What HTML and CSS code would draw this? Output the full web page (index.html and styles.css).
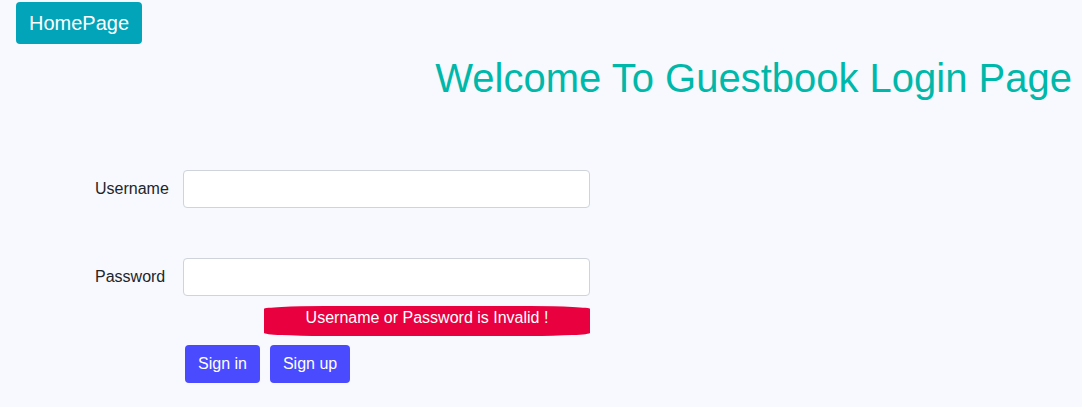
FILE: index.html
```html
<!DOCTYPE html>
<html>
<head>
<meta charset="utf-8">
<link rel="stylesheet" href="styles.css">
</head>
<body>
<header class="top">
  <a class="home-btn" href="#">HomePage</a>
</header>
<h1 class="title">Welcome To Guestbook Login Page</h1>
<form class="login">
  <div class="row">
    <label class="lbl">Username</label>
    <input class="field" type="text">
  </div>
  <div class="row row-second">
    <label class="lbl">Password</label>
    <input class="field" type="password">
  </div>
  <div class="error">Username or Password is Invalid !</div>
  <div class="actions">
    <button class="btn" type="button">Sign in</button>
    <button class="btn" type="button">Sign up</button>
  </div>
</form>
</body>
</html>
```
FILE: styles.css
```css
html, body {
  margin: 0;
  padding: 0;
  background: #f8f8ff;
  font-family: "Liberation Sans", Arial, sans-serif;
  color: #212529;
}
body {
  height: 407px;
  overflow: hidden;
}
.top {
  padding: 2px 0 0 16px;
  display: flex;
}
.home-btn {
  display: inline-block;
  background: #02a4ba;
  color: #fff;
  font-size: 20px;
  line-height: 30px;
  padding: 6px 13px;
  border-radius: 4px;
  text-decoration: none;
}
.title {
  margin: 11px 10px 0 0;
  text-align: right;
  font-size: 40px;
  font-weight: normal;
  line-height: 46px;
  color: #00b8a9;
}
.login {
  padding: 69px 0 0 95px;
  display: flex;
  flex-direction: column;
}
.row {
  display: flex;
  align-items: center;
}
.row-second {
  margin-top: 50px;
}
.lbl {
  width: 88px;
  font-size: 16px;
}
.field {
  box-sizing: border-box;
  width: 407px;
  height: 38px;
  border: 1px solid #ced4da;
  border-radius: 4px;
  background: #fff;
  margin: 0;
}
.error {
  box-sizing: border-box;
  margin: 10px 0 0 169px;
  width: 326px;
  height: 30px;
  padding-top: 3px;
  background: #e8003f;
  color: #fff;
  font-size: 16px;
  text-align: center;
  border-radius: 60px / 3px;
}
.actions {
  display: flex;
  gap: 10px;
  margin: 9px 0 0 90px;
}
.btn {
  font-family: "Liberation Sans", Arial, sans-serif;
  font-size: 16px;
  line-height: 24px;
  padding: 7px 13px;
  border: none;
  border-radius: 4px;
  background: #4a4aff;
  color: #fff;
}
```
